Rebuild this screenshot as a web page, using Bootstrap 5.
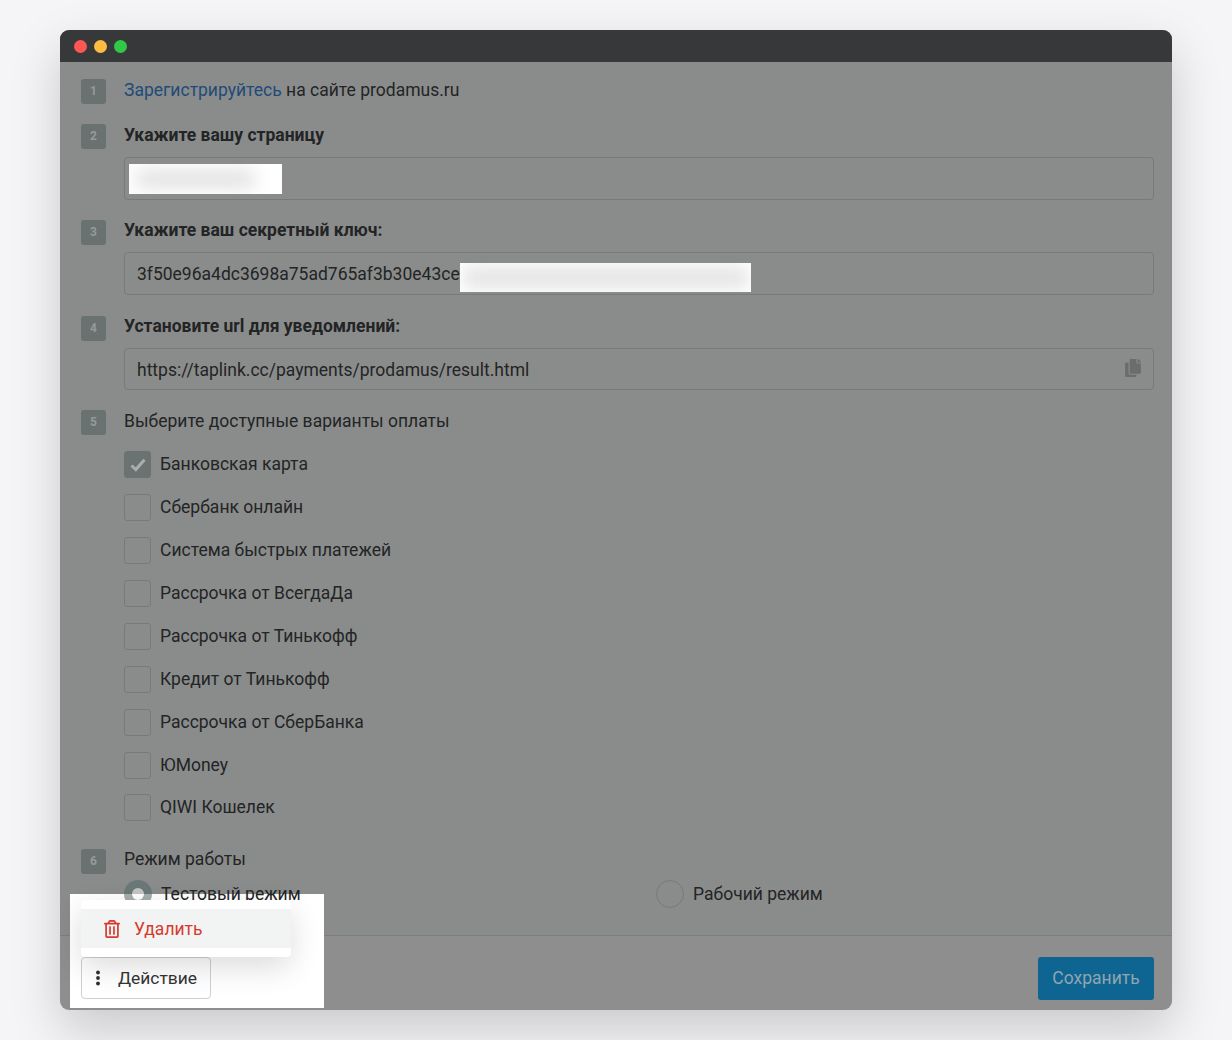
<!doctype html>
<html lang="ru">
<head>
<meta charset="utf-8">
<title>Prodamus</title>
<link href="https://cdn.jsdelivr.net/npm/bootstrap@5.3.0/dist/css/bootstrap.min.css" rel="stylesheet">
<style>
html,body{height:1040px;overflow:hidden}
body{background:#f5f5f8;font-family:Roboto,"Liberation Sans",sans-serif;font-size:17.5px;line-height:22px;color:#232425}
.app-window{position:relative;width:1112px;height:980px;margin:30px 60px;border-radius:9px;background:#8e8e8e;box-shadow:0 20px 50px rgba(0,0,0,.18);overflow:hidden}
.title-bar{height:32px;background:#37383a;padding:1px 0 0 14px;gap:7px}
.dot{width:13px;height:13px;border-radius:50%}
.form-area{height:874px;background:#8a8c8b;padding:17px 18px 0 21px;border-bottom:1px solid #7d7e7d}
.step{display:flex;gap:18px}
.step-body{flex:1;min-width:0}
.num{flex:none;width:25px;height:25px;border-radius:3px;background:#697271;color:#959b9a;font-size:12px;font-weight:700;line-height:25px;text-align:center}
.step-title{height:23px}
.title-up{line-height:20px}
.step-link{color:#1e4b78;text-decoration:none}
.field{height:43px;margin-top:9px;background:transparent;border:1px solid #787a79;border-radius:4px;padding:0 12px;line-height:43px;position:relative;white-space:nowrap}
.field-low{height:42px;line-height:42px}
.mask{position:absolute;background:#fff;overflow:hidden}
.mask::after{content:"";position:absolute;border-radius:8px}
.mask-page{left:4px;top:6px;width:153px;height:30px}
.mask-page::after{inset:6px 26px 6px 6px;background:#e0e0e0;filter:blur(9px)}
.mask-key{left:335px;top:10px;width:291px;height:29px}
.mask-key::after{inset:3px 2px;background:#e6e6e6;filter:blur(8px)}
.copy-ic{position:absolute;right:12px;top:10px;width:16px;height:18px;fill:#6b6c6c}
.opt{display:flex;align-items:flex-start;gap:9px;height:27px;line-height:26px;margin-top:16px}
.opt:first-child{margin-top:0}
.opt:last-child{margin-top:15px}
.box{flex:none;width:27px;height:27px;border:1px solid #787a79;border-radius:3px;display:flex;align-items:center;justify-content:center}
.box-on{background:#6a7371;border-color:#6a7371}
.round{flex:none;width:28px;height:28px;border-radius:50%;border:1px solid #787a79}
.round-on{position:relative;border:0;background:linear-gradient(#6a7878 14px,#a5adad 14px)}
.round-on::after{content:"";position:absolute;left:8px;top:8px;width:12px;height:12px;border-radius:50%;background:linear-gradient(#c4c6c6 6px,#fff 6px)}
.opt-radio,.opt-radio:last-child{height:28px;margin:0;align-items:center;line-height:22px}
.over-spot{position:relative;z-index:2}
.footer-area{height:73px;padding:21px 18px 0 0}
.save-btn{width:116px;height:43px;padding:0;background:#0f6591;border:0;border-radius:3px;color:#8fa6b1;font-size:17.5px;line-height:43px}
.spot{position:absolute;left:10px;top:864px;width:254px;height:114px;background:#fff;padding:6px 33px 0 11px}
.menu-box{position:relative;z-index:3;height:57px;padding:9px 0;background:#fff;border-radius:4px;box-shadow:0 10px 30px rgba(0,0,0,.14)}
.menu-row{height:39px;background:#f2f3f3;padding-left:23px;gap:14px;color:#d63a2e}
.menu-row svg{width:16px;height:18px;fill:#d63a2e}
.act-btn{position:relative;z-index:2;width:130px;height:42px;padding:0 0 0 13px;background:#fff;border:1px solid #cfcfcf;border-radius:4px;color:#333435;font-size:17.4px;gap:17px;justify-content:flex-start}
.act-btn svg{width:6px;height:16px;fill:#2d2e2f}
.g20{margin-top:20px}.g21{margin-top:21px}
</style>
</head>
<body>
<div class="app-window">
  <div class="title-bar d-flex align-items-center">
    <span class="dot" style="background:#fc5753"></span>
    <span class="dot" style="background:#fdbc40"></span>
    <span class="dot" style="background:#33c748"></span>
  </div>
  <div class="form-area">
    <div class="step"><div class="num">1</div><div class="step-body"><a class="step-link" href="#">Зарегистрируйтесь</a> на сайте prodamus.ru</div></div>
    <div class="step g20"><div class="num">2</div><div class="step-body"><div class="step-title fw-bold">Укажите вашу страницу</div><div class="field" style="margin-top:10px"><div class="mask mask-page"></div></div></div></div>
    <div class="step g20"><div class="num">3</div><div class="step-body"><div class="step-title title-up fw-bold">Укажите ваш секретный ключ:</div><div class="field">3f50e96a4dc3698a75ad765af3b30e43ce<div class="mask mask-key"></div></div></div></div>
    <div class="step g21"><div class="num">4</div><div class="step-body"><div class="step-title title-up fw-bold">Установите url для уведомлений:</div><div class="field field-low">https://taplink.cc/payments/prodamus/result.html<svg class="copy-ic" viewBox="0 0 448 512"><path d="M320 448v40c0 13.255-10.745 24-24 24H24c-13.255 0-24-10.745-24-24V120c0-13.255 10.745-24 24-24h72v296c0 30.879 25.121 56 56 56h168zm0-344V0H152c-13.255 0-24 10.745-24 24v368c0 13.255 10.745 24 24 24h272c13.255 0 24-10.745 24-24V128H344c-13.2 0-24-10.8-24-24zm120.971-31.029L375.029 7.029A24 24 0 0 0 358.059 0H352v96h96v-6.059a24 24 0 0 0-7.029-16.97z"/></svg></div></div></div>
    <div class="step g20"><div class="num">5</div><div class="step-body">
      <div class="step-title">Выберите доступные варианты оплаты</div>
      <div style="margin-top:18px">
        <div class="opt"><span class="box box-on"><svg width="16" height="14" viewBox="0 0 16 14"><path d="M1.5 7.5 5.8 11.5 14.5 1.8" fill="none" stroke="#a9aeac" stroke-width="3"/></svg></span>Банковская карта</div>
        <div class="opt"><span class="box"></span>Сбербанк онлайн</div>
        <div class="opt"><span class="box"></span>Система быстрых платежей</div>
        <div class="opt"><span class="box"></span>Рассрочка от ВсегдаДа</div>
        <div class="opt"><span class="box"></span>Рассрочка от Тинькофф</div>
        <div class="opt"><span class="box"></span>Кредит от Тинькофф</div>
        <div class="opt"><span class="box"></span>Рассрочка от СберБанка</div>
        <div class="opt"><span class="box"></span>ЮMoney</div>
        <div class="opt"><span class="box"></span>QIWI Кошелек</div>
      </div>
    </div></div>
    <div class="step" style="margin-top:28px"><div class="num">6</div><div class="step-body">
      <div class="step-title title-up">Режим работы</div>
      <div class="d-flex" style="margin-top:8px">
        <div class="opt opt-radio over-spot" style="width:532px"><span class="round round-on"></span>Тестовый режим</div>
        <div class="opt opt-radio"><span class="round"></span>Рабочий режим</div>
      </div>
    </div></div>
  </div>
  <div class="footer-area d-flex justify-content-end">
    <button type="button" class="btn save-btn">Сохранить</button>
  </div>
  <div class="spot">
    <div class="menu-box"><div class="menu-row d-flex align-items-center"><svg viewBox="0 0 448 512"><path d="M268 416h24a12 12 0 0 0 12-12V188a12 12 0 0 0-12-12h-24a12 12 0 0 0-12 12v216a12 12 0 0 0 12 12zM432 80h-82.41l-34-56.7A48 48 0 0 0 274.41 0H173.59a48 48 0 0 0-41.16 23.3L98.41 80H16A16 16 0 0 0 0 96v16a16 16 0 0 0 16 16h16v336a48 48 0 0 0 48 48h288a48 48 0 0 0 48-48V128h16a16 16 0 0 0 16-16V96a16 16 0 0 0-16-16zM171.84 50.91A6 6 0 0 1 177 48h94a6 6 0 0 1 5.15 2.91L293.61 80H154.39zM368 464H80V128h288zm-212-48h24a12 12 0 0 0 12-12V188a12 12 0 0 0-12-12h-24a12 12 0 0 0-12 12v216a12 12 0 0 0 12 12z"/></svg>Удалить</div></div>
    <button type="button" class="btn act-btn d-flex align-items-center"><svg viewBox="0 0 6 16"><circle cx="3" cy="2.5" r="1.9"/><circle cx="3" cy="8" r="1.9"/><circle cx="3" cy="13.5" r="1.9"/></svg>Действие</button>
  </div>
</div>
<script src="https://cdn.jsdelivr.net/npm/bootstrap@5.3.0/dist/js/bootstrap.bundle.min.js"></script>
</body>
</html>
